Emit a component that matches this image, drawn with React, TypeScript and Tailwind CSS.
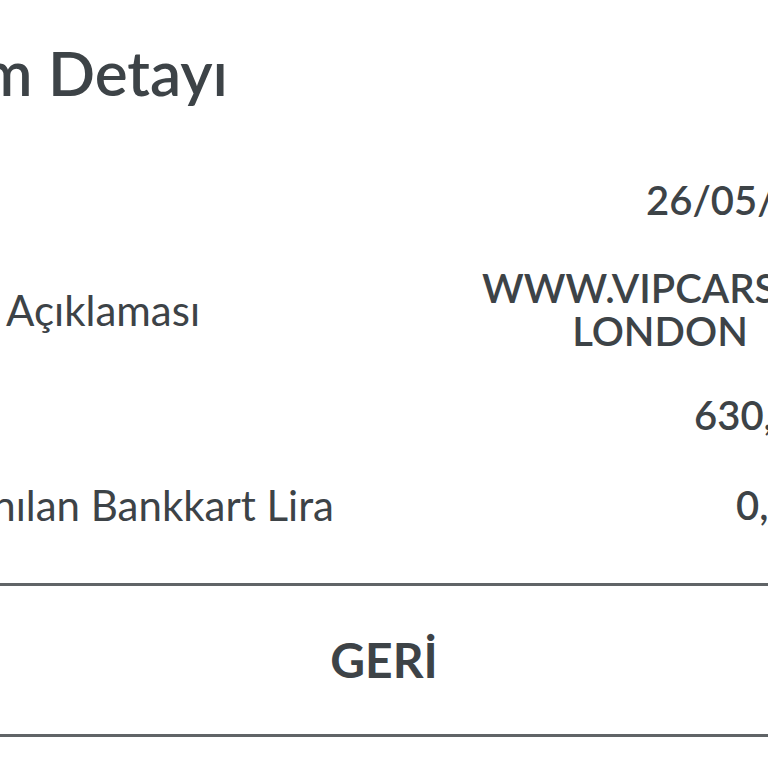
import React from 'react';

// Transaction detail sheet, shown zoomed in so the edges are cut off.
const ROWS = [
  { label: 'Tarih', labelEnd: 'w-0', value: ['26/05/2019'], valueStart: 'pl-[646px]', h: 'h-[100px]' },
  { label: 'İşlem Açıklaması', labelEnd: 'w-[200px]', value: ['WWW.VIPCARS.COM', 'LONDON'], valueStart: 'pl-[482px]', h: 'h-[120px]' },
  { label: 'Tutar', labelEnd: 'w-0', value: ['630,00 TL'], valueStart: 'pl-[694px]', h: 'h-[90px]' },
  { label: 'Kazanılan Bankkart Lira', labelEnd: 'w-[334px]', value: ['0,00'], valueStart: 'pl-[736px]', h: 'h-[90px]' },
];

export default function App() {
  return (
    <div
      className="w-[768px] h-[768px] overflow-hidden bg-white text-[#3d4347]"
      style={{ fontFamily: 'Lato, "Noto Sans", sans-serif' }}
    >
      {/* Title */}
      <div className="h-[150px] pt-[28px]">
        <div className="flex justify-end w-[228px]">
          <h1 className="shrink-0 whitespace-nowrap text-[62px] leading-[88px] font-semibold">İşlem Detayı</h1>
        </div>
      </div>

      {/* Detail rows */}
      <div className="flex flex-col">
        {ROWS.map((row) => (
          <div key={row.label} className={`relative flex items-center ${row.h}`}>
            <div className={`flex justify-end shrink-0 ${row.labelEnd}`}>
              <span className="shrink-0 whitespace-nowrap text-[42px] leading-[48px]">{row.label}</span>
            </div>
            <div className={`absolute inset-y-0 left-0 flex items-center ${row.valueStart}`}>
              <div className="w-[356px] text-center whitespace-nowrap text-[40px] leading-[43px] font-semibold">
                {row.value.map((v) => (
                  <div key={v} className={row.value.length > 1 ? '' : 'text-left'}>{v}</div>
                ))}
              </div>
            </div>
          </div>
        ))}
      </div>

      {/* Footer action */}
      <div className="mt-[33px] border-t-[3px] border-[#606467]" />
      <button className="w-full h-[148px] flex items-center justify-center text-[48px] font-bold">GERİ</button>
      <div className="border-t-[3px] border-[#606467]" />
    </div>
  );
}
